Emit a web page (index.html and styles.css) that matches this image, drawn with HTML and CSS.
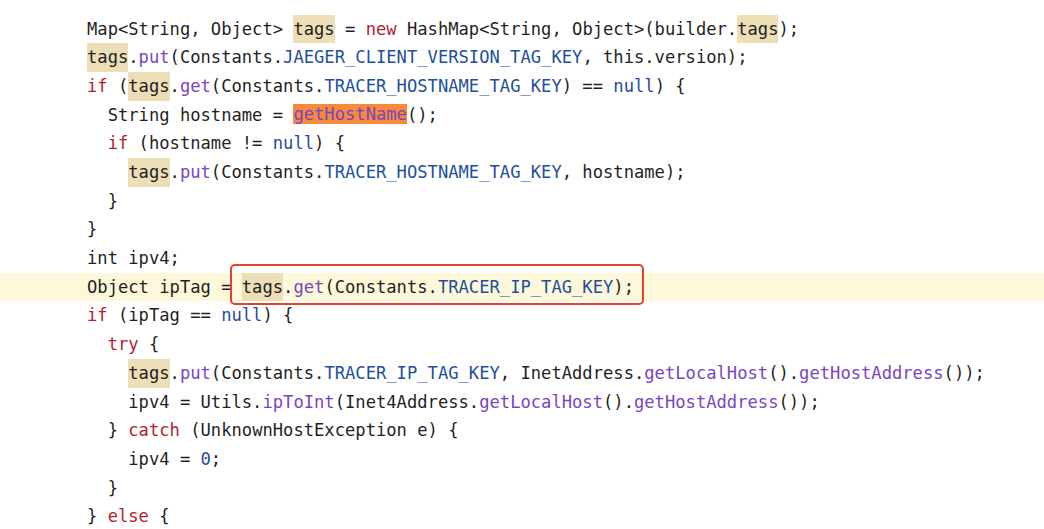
FILE: index.html
```html
<!DOCTYPE html>
<html lang="en">
<head>
  <meta charset="UTF-8">
  <title>Tracer tags</title>
  <link rel="stylesheet" href="styles.css">
</head>
<body>
  <div class="code">
    <div class="line">Map&lt;String, Object&gt; <span class="hl">tags</span> = <span class="kw">new</span> HashMap&lt;String, Object&gt;(builder.<span class="hl">tags</span>);</div>
    <div class="line"><span class="hl">tags</span>.<span class="fn">put</span>(Constants.<span class="const">JAEGER_CLIENT_VERSION_TAG_KEY</span>, this.version);</div>
    <div class="line"><span class="kw">if</span> (<span class="hl">tags</span>.<span class="fn">get</span>(Constants.<span class="const">TRACER_HOSTNAME_TAG_KEY</span>) == <span class="lit">null</span>) {</div>
    <div class="line">  String hostname = <span class="hl-strong fn">getHostName</span>();</div>
    <div class="line">  <span class="kw">if</span> (hostname != <span class="lit">null</span>) {</div>
    <div class="line">    <span class="hl">tags</span>.<span class="fn">put</span>(Constants.<span class="const">TRACER_HOSTNAME_TAG_KEY</span>, hostname);</div>
    <div class="line">  }</div>
    <div class="line">}</div>
    <div class="line">int ipv4;</div>
    <div class="line current">Object ipTag = <span class="boxed"><span class="hl">tags</span>.<span class="fn">get</span>(Constants.<span class="const">TRACER_IP_TAG_KEY</span>);</span></div>
    <div class="line"><span class="kw">if</span> (ipTag == <span class="lit">null</span>) {</div>
    <div class="line">  <span class="kw">try</span> {</div>
    <div class="line">    <span class="hl">tags</span>.<span class="fn">put</span>(Constants.<span class="const">TRACER_IP_TAG_KEY</span>, InetAddress.<span class="fn">getLocalHost</span>().<span class="fn">getHostAddress</span>());</div>
    <div class="line">    ipv4 = Utils.<span class="fn">ipToInt</span>(Inet4Address.<span class="fn">getLocalHost</span>().<span class="fn">getHostAddress</span>());</div>
    <div class="line">  } <span class="kw">catch</span> (UnknownHostException e) {</div>
    <div class="line">    ipv4 = <span class="lit">0</span>;</div>
    <div class="line">  }</div>
    <div class="line">} <span class="kw">else</span> {</div>
  </div>
</body>
</html>
```

FILE: styles.css
```css
* { margin: 0; padding: 0; box-sizing: border-box; }
html, body {
  background: #ffffff;
  overflow: hidden;
}
body {
  font-family: 'DejaVu Sans Mono', 'Liberation Mono', monospace;
  font-size: 17.15px;
  color: #1f1f1f;
}
.code {
  padding-top: 14.6px;
}
.line {
  height: 28.7px;
  line-height: 28.7px;
  white-space: pre;
  padding-left: 87px;
}
.current {
  background: #fdf8d9;
}
.kw { color: #b4232d; }
.fn { color: #7a45c2; }
.const { color: #1e4f9c; }
.lit { color: #1d4aa3; }
.hl {
  display: inline-block;
  height: 28.7px;
  background: #ecdeb6;
}
.hl-strong {
  display: inline-block;
  height: 20px;
  line-height: 20px;
  vertical-align: 1px;
  background: #f6893b;
}
.boxed {
  position: relative;
}
.boxed::after {
  content: '';
  position: absolute;
  left: -12px;
  right: -10px;
  top: -13px;
  bottom: -8px;
  border: 2.5px solid #e7412b;
  border-radius: 5px;
}
```
